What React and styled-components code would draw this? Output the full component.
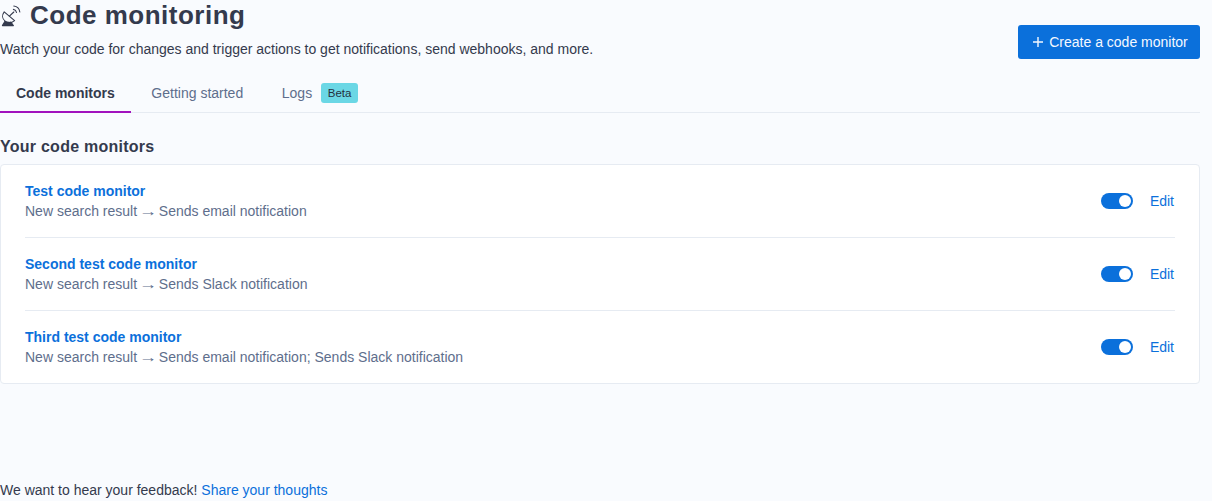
import styled, { createGlobalStyle } from "styled-components"

const GlobalStyle = createGlobalStyle`
  html, body {
    margin: 0;
    padding: 0;
    background: #f9fbfe;
    overflow: hidden;
  }
  * {
    box-sizing: border-box;
  }
`
const Page = styled.div`
  width: 1212px;
  height: 501px;
  padding-right: 12px;
  display: flex;
  flex-direction: column;
  font-family: "Liberation Sans", Arial, sans-serif;
  font-size: 14px;
  color: #343a4d;
`
const Header = styled.div`
  height: 59px;
  display: flex;
  justify-content: space-between;
  align-items: flex-end;
`
const Heading = styled.div`
  display: flex;
  flex-direction: column;
`
const Title = styled.h1`
  margin: 0;
  height: 30px;
  display: flex;
  align-items: center;
  gap: 8px;
  font-size: 26px;
  line-height: 30px;
  font-weight: 700;
  letter-spacing: 0.5px;
  color: #343a4d;
`
const Description = styled.p`
  margin: 10px 0 0;
  height: 19px;
  font-size: 14px;
  line-height: 19px;
  color: #343a4d;
`
const CreateButton = styled.button`
  width: 182px;
  height: 34px;
  padding: 0 0 0 2px;
  display: flex;
  align-items: center;
  justify-content: center;
  gap: 5px;
  border: none;
  border-radius: 3px;
  background: #0b70db;
  color: #f4f8ff;
  font-family: inherit;
  font-size: 14px;
`
const Tabs = styled.div`
  margin-top: 17px;
  height: 37px;
  display: flex;
  border-bottom: 1px solid #e6ebf2;
`
const Tab = styled.div`
  height: 37px;
  padding: 0 16px 1px;
  display: flex;
  align-items: center;
  gap: 9px;
  font-size: 14px;
  font-weight: ${p => (p.$active ? 700 : 400)};
  color: ${p => (p.$active ? "#343a4d" : "#5e6e8c")};
  border-bottom: 2px solid ${p => (p.$active ? "#a112bd" : "transparent")};
`
const MiddleTab = styled(Tab)`
  width: 133px;
  padding: 0 0 1px;
  justify-content: center;
`
const LogsTab = styled(Tab)`
  padding-left: 18px;
`
const Badge = styled.span`
  width: 37px;
  height: 20px;
  display: flex;
  align-items: center;
  justify-content: center;
  border-radius: 3px;
  background: #6bd7e5;
  color: #24303f;
  font-size: 11.5px;
  font-weight: 400;
`
const SectionTitle = styled.h2`
  margin: 24px 0 0;
  height: 20px;
  font-size: 16px;
  line-height: 20px;
  font-weight: 700;
  letter-spacing: 0.25px;
  color: #343a4d;
`
const Card = styled.div`
  margin-top: 7px;
  padding: 0 24px;
  background: #ffffff;
  border: 1px solid #e6ebf2;
  border-radius: 4px;
`
const Row = styled.div`
  height: ${p => (p.$last ? "72px" : "73px")};
  display: flex;
  align-items: center;
  justify-content: space-between;
  border-bottom: ${p => (p.$last ? "none" : "1px solid #e6ebf2")};
`
const RowText = styled.div`
  display: flex;
  flex-direction: column;
  gap: 1px;
`
const MonitorName = styled.a`
  font-size: 14px;
  line-height: 19px;
  font-weight: 700;
  color: #0b70db;
`
const MonitorDetail = styled.div`
  height: 19px;
  font-size: 14px;
  line-height: 19px;
  color: #5e6e8c;
`
const Arrow = styled.span`
  display: inline-block;
  line-height: 1;
  transform: scaleX(1.3);
`
const RowActions = styled.div`
  display: flex;
  align-items: center;
  gap: 17px;
  margin-right: 1px;
`
const Toggle = styled.div`
  width: 32px;
  height: 16px;
  padding: 2px;
  display: flex;
  justify-content: flex-end;
  border-radius: 8px;
  background: #0b70db;
`
const Knob = styled.div`
  width: 12px;
  height: 12px;
  border-radius: 50%;
  background: #ffffff;
`
const EditLink = styled.a`
  font-size: 14px;
  line-height: 19px;
  color: #0b70db;
`
const Feedback = styled.div`
  margin-top: auto;
  height: 22px;
  font-size: 14px;
  line-height: 22px;
  color: #343a4d;
`
const FeedbackLink = styled.a`
  color: #0b70db;
`

const DishIcon = () => (
  <svg width="22" height="24" viewBox="0 0 22 24" fill="none" stroke="#343a4d" strokeWidth="1.1" strokeLinecap="round" strokeLinejoin="round">
    <path d="M4.2 8.8c-2.4 3.2-2 7 .9 9.4 2.8 2.2 6.6 1.9 9.5-.6L4.2 8.8Z" />
    <path d="M9.4 13.2l4.4-4.2" />
    <path d="M5 18.2 2.4 22.6h11l-2.6-3.6" fill="#343a4d" />
    <path d="M13.4 6.4c1.7.3 2.8 1.4 3.1 3.1" />
    <path d="M13.8 3c3.4.4 5.6 2.6 6 6" />
  </svg>
)

const monitors = [
  { name: "Test code monitor", action: "Sends email notification" },
  { name: "Second test code monitor", action: "Sends Slack notification" },
  { name: "Third test code monitor", action: "Sends email notification; Sends Slack notification" },
]

const App = () => {
  return (
    <Page>
      <GlobalStyle />
      <Header>
        <Heading>
          <Title>
            <DishIcon />
            Code monitoring
          </Title>
          <Description>Watch your code for changes and trigger actions to get notifications, send webhooks, and more.</Description>
        </Heading>
        <CreateButton>
          <svg width="12" height="12" viewBox="0 0 12 12" stroke="#f4f8ff" strokeWidth="1.4">
            <path d="M6 1v10M1 6h10" />
          </svg>
          Create a code monitor
        </CreateButton>
      </Header>
      <Tabs>
        <Tab $active>Code monitors</Tab>
        <MiddleTab>Getting started</MiddleTab>
        <LogsTab>Logs <Badge>Beta</Badge></LogsTab>
      </Tabs>
      <SectionTitle>Your code monitors</SectionTitle>
      <Card>
        {monitors.map((m, i) => (
          <Row key={m.name} $last={i === monitors.length - 1}>
            <RowText>
              <MonitorName>{m.name}</MonitorName>
              <MonitorDetail>New search result <Arrow>→</Arrow> {m.action}</MonitorDetail>
            </RowText>
            <RowActions>
              <Toggle><Knob /></Toggle>
              <EditLink>Edit</EditLink>
            </RowActions>
          </Row>
        ))}
      </Card>
      <Feedback>
        We want to hear your feedback! <FeedbackLink>Share your thoughts</FeedbackLink>
      </Feedback>
    </Page>
  )
}

export default App
